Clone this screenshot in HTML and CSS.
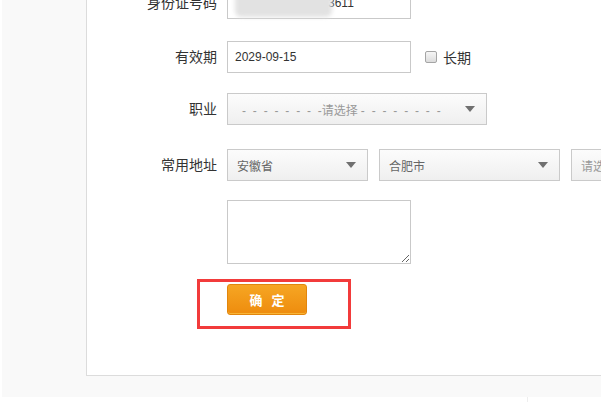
FILE: index.html
```html
<!DOCTYPE html>
<html lang="zh-CN">
<head>
<meta charset="utf-8">
<title>证件信息</title>
<link rel="stylesheet" href="styles.css">
</head>
<body>
<div class="shell">
  <div class="panel">
    <form class="form">
      <div class="row row-id">
        <label class="label">身份证号码</label>
        <div class="field">
          <div class="input-box"><span class="masked"></span><span class="id-tail">3611</span></div>
        </div>
      </div>
      <div class="row row-date">
        <label class="label">有效期</label>
        <div class="field">
          <div class="input-box">2029-09-15</div>
          <span class="check"></span>
          <span class="check-text">长期</span>
        </div>
      </div>
      <div class="row row-job">
        <label class="label">职业</label>
        <div class="field">
          <div class="select select-job">
            <span class="placeholder"><span class="dashes">- - - - - - - -</span>请选择<span class="dashes dashes-after">- - - - - - - -</span></span>
            <i class="arrow"></i>
          </div>
        </div>
      </div>
      <div class="row row-addr">
        <label class="label">常用地址</label>
        <div class="field field-addr">
          <div class="select select-prov"><span class="value">安徽省</span><i class="arrow"></i></div>
          <div class="select select-city"><span class="value">合肥市</span><i class="arrow"></i></div>
          <div class="select select-dist"><span class="placeholder">请选择</span><i class="arrow"></i></div>
        </div>
      </div>
      <div class="row row-note">
        <span class="label"></span>
        <div class="field"><textarea class="note"></textarea></div>
      </div>
      <div class="row row-submit">
        <span class="label"></span>
        <div class="field">
          <div class="submit-wrap">
            <button type="button" class="submit">确&nbsp;定</button>
            <span class="highlight"></span>
          </div>
        </div>
      </div>
    </form>
  </div>
</div>
<div class="footer"><span class="footer-line"></span></div>
</body>
</html>
```
FILE: styles.css
```css
html, body {
  margin: 0;
  padding: 0;
  background: #ffffff;
}

body {
  width: 601px;
  height: 402px;
  overflow: hidden;
  font-family: "Liberation Sans", "Noto Sans CJK SC", sans-serif;
  color: #333;
}

.shell {
  margin-left: 2px;
  height: 397px;
  padding-left: 84px;
  background: #f9f9f9;
  overflow: hidden;
  box-sizing: border-box;
  display: flex;
}

.panel {
  flex: none;
  width: 700px;
  height: 376px;
  box-sizing: border-box;
  background: #fff;
  border-left: 1px solid #dcdcdc;
  border-bottom: 1px solid #dcdcdc;
  display: flex;
  flex-direction: column;
}

.form {
  display: flex;
  flex-direction: column;
  margin: 0;
}

.row {
  display: grid;
  grid-template-columns: 130px 1fr;
  column-gap: 10px;
  align-items: center;
}

.row-id { margin-top: -13px; }
.row-date { margin-top: 22px; }
.row-job { margin-top: 20px; }
.row-addr { margin-top: 24px; }
.row-note { margin-top: 19px; }
.row-submit { margin-top: 20px; }

.label {
  text-align: right;
  font-size: 14px;
  line-height: 20px;
  color: #333;
}

.field {
  display: flex;
  align-items: center;
}

.field-addr {
  gap: 11px;
  flex-wrap: nowrap;
}

.input-box {
  width: 184px;
  height: 32px;
  box-sizing: border-box;
  border: 1px solid #c9c9c9;
  padding: 0 7px;
  display: flex;
  align-items: center;
  font-size: 12px;
  color: #333;
  background: #fff;
}

.masked {
  position: relative;
  z-index: 1;
  width: 97px;
  height: 28px;
  background: #e2e2e2;
  border-radius: 6px;
  filter: blur(2px);
  flex: none;
}

.id-tail {
  margin-left: -4px;
}

.check {
  width: 12px;
  height: 12px;
  box-sizing: border-box;
  border: 1px solid #a5a5a5;
  border-radius: 2px;
  background: linear-gradient(#f6f6f6, #dcdcdc);
  margin-left: 14px;
}

.check-text {
  margin-left: 6px;
  font-size: 14px;
  color: #333;
}

.select {
  height: 32px;
  box-sizing: border-box;
  border: 1px solid #cacaca;
  background: linear-gradient(#fcfcfc, #efefef);
  display: flex;
  align-items: center;
  justify-content: space-between;
  padding: 0 11px 0 9px;
  font-size: 12px;
  flex: none;
}

.select-job {
  width: 260px;
  padding-left: 14px;
}

.select-prov { width: 141px; }
.select-city { width: 181px; }
.select-dist { width: 140px; }

.value {
  color: #666;
}

.placeholder {
  color: #999;
  white-space: nowrap;
}

.dashes {
  word-spacing: 3.5px;
}

.dashes-after {
  margin-left: 3px;
}

.arrow {
  width: 0;
  height: 0;
  border-left: 5.5px solid transparent;
  border-right: 5.5px solid transparent;
  border-top: 6px solid #707070;
}

.note {
  width: 184px;
  height: 64px;
  box-sizing: border-box;
  margin: 0;
  padding: 4px;
  border: 1px solid #c9c9c9;
  font-family: inherit;
  font-size: 12px;
  display: block;
}

.submit-wrap {
  position: relative;
}

.submit {
  display: block;
  width: 80px;
  height: 31px;
  box-sizing: border-box;
  border: 1px solid #e2860d;
  border-radius: 3px;
  background: linear-gradient(#f6a623, #ee8c0e);
  box-shadow: inset 0 -1px 0 #f8b537;
  color: #fff;
  font-family: "Noto Sans CJK SC", sans-serif;
  font-weight: bold;
  font-size: 13px;
  letter-spacing: 3px;
  padding: 0 0 0 3px;
  margin: 0;
}

.highlight {
  position: absolute;
  left: -30px;
  top: -5px;
  width: 154px;
  height: 50px;
  box-sizing: border-box;
  border: 3px solid #f23b3b;
  pointer-events: none;
}

.footer {
  height: 5px;
  background: #fff;
  display: flex;
}

.footer-line {
  margin-left: 527px;
  border-left: 1px solid #eeeeee;
}
```
